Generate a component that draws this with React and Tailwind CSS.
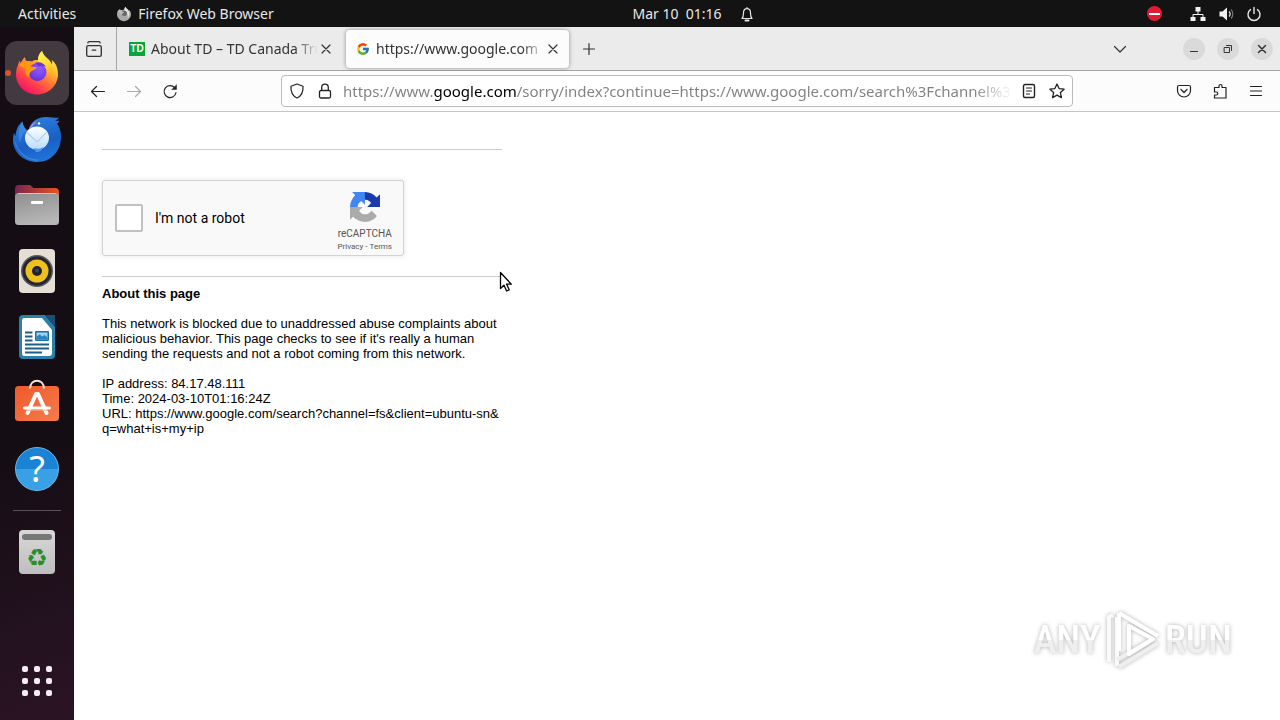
import { useState } from "react";
import { FcGoogle } from "react-icons/fc";

const FirefoxLogo = ({ className }) => (
  <svg viewBox="0 0 48 48" className={className} aria-hidden="true">
    <defs>
      <linearGradient id="ffBody" x1="0.85" y1="0.1" x2="0.25" y2="0.95">
        <stop offset="0" stopColor="#fff44f" />
        <stop offset="0.3" stopColor="#ffb52e" />
        <stop offset="0.55" stopColor="#ff7139" />
        <stop offset="0.8" stopColor="#ff3750" />
        <stop offset="1" stopColor="#f5156c" />
      </linearGradient>
      <linearGradient id="ffFlame" x1="0.3" y1="0" x2="0.7" y2="1">
        <stop offset="0" stopColor="#fff44f" />
        <stop offset="0.5" stopColor="#ffd83a" />
        <stop offset="1" stopColor="#ff980e" stopOpacity="0" />
      </linearGradient>
      <radialGradient id="ffGlobe" cx="0.6" cy="0.3" r="0.8">
        <stop offset="0" stopColor="#9059ff" />
        <stop offset="0.6" stopColor="#7542e5" />
        <stop offset="1" stopColor="#592acb" />
      </radialGradient>
    </defs>
    <path
      fill="url(#ffBody)"
      d="M29 2c1 4 4 6 7 9 1.500 1.500 2.500 3 3 4.500.3-1.500.2-3-.3-4.500C43 14 45 19.500 45 25c0 11.600-9.400 20.500-21 20.500S3 36.600 3 25c0-3.500.8-6.500 2-9 .2-1.500.8-3 2-4.200.1 1 .3 1.700.7 2.200C8.800 12 9.800 10 12 8c0 1.500.5 3 1.500 4 2-.3 4 0 5.500.6C21 10.500 24 11 25 11c0-4 1.500-7 4-9z"
    />
    <path fill="url(#ffFlame)" d="M29 2c1 4 4 6 7 9 5 6 5 15 2 21-3-8-7-14-13-19-.5-4 1-8.500 4-11z" />
    <circle cx="24.500" cy="23" r="9" fill="url(#ffGlobe)" />
    <path fill="#6b33d6" d="M22 14c4-2 9 0 11 4-3-1.500-5-1.500-7-.5z" />
    <path
      fill="#ff980e"
      d="M6 16c4-4 9-4.500 13-3.400-2 1.200-2.800 2.600-3 3.900 2 1.500 4.700 1.500 7.700 1.500 0 2-3.200 3.200-5.200 4.200-1.800 1-2.500 2.800-2 5.800-3-1-5-4-4-8z"
    />
  </svg>
);

const ThunderbirdLogo = () => (
  <svg viewBox="0 0 48 48" className="size-12" aria-hidden="true">
    <defs>
      <linearGradient id="tbBody" x1="0.3" y1="0" x2="0.6" y2="1">
        <stop offset="0" stopColor="#2f7fdc" />
        <stop offset="0.6" stopColor="#1a5fc4" />
        <stop offset="1" stopColor="#1f76dc" />
      </linearGradient>
      <linearGradient id="tbMail" x1="0" y1="0" x2="0" y2="1">
        <stop offset="0" stopColor="#ffffff" />
        <stop offset="1" stopColor="#b9dbfa" />
      </linearGradient>
    </defs>
    <path
      fill="url(#tbBody)"
      d="M16 14C18 6 25 2 33 2c6 0 9 1 13 .8-1 1.600-2.500 2.200-4 2.700 2 .5 3.500.5 4.500.3-.6 1.700-1.600 2.200-2.600 2.500C46.500 12 48 16.500 48 22c0 14-10 25-23.500 25C10 47 0 37 0 25c0-3 .3-5 1-7 .5 1 .8 2 1.500 3C3 15 5 10 9.500 6.500 10 10 11 12 14 15z"
    />
    <path fill="#4a93e6" d="M9.500 6.500C5.500 12 4.500 20 7 28c1-6 3-10 6.500-12-2.500-3-3.500-6-4-9.500z" opacity="0.6" />
    <path fill="#b58ae6" d="M16 14c1.500-4 5-7 8-7.500-3 2.500-4 4.500-6.500 7z" />
    <ellipse cx="24" cy="23" rx="12" ry="11.500" fill="url(#tbMail)" />
    <path d="M14 17.500l9 8.500q1 1 2 0l8.500-8.500" fill="none" stroke="#b4d0ee" strokeWidth="1.200" />
    <path fill="#4f97ea" d="M21 33c4 1 7 1 9-1-1 4-3 5-7 5z" />
    <circle cx="26" cy="8.500" r="1.200" fill="#fff" />
    <path d="M2 27c3 11 12 18 23 18" fill="none" stroke="#50a0f5" strokeWidth="1.500" opacity="0.4" />
  </svg>
);

const FilesIcon = () => (
  <svg viewBox="0 0 48 48" className="size-12" aria-hidden="true">
    <defs>
      <linearGradient id="fTab" x1="0" x2="1">
        <stop offset="0" stopColor="#7a2450" />
        <stop offset="1" stopColor="#e9541f" />
      </linearGradient>
      <linearGradient id="fBody" x1="0" y1="0" x2="0.3" y2="1">
        <stop offset="0" stopColor="#8e8e8e" />
        <stop offset="1" stopColor="#b6b6b6" />
      </linearGradient>
    </defs>
    <path fill="url(#fTab)" d="M2 8q0-4 4-4h11l3.500 3H42q4 0 4 4v12H2z" />
    <rect x="2" y="12" width="44" height="32" rx="3.500" fill="url(#fBody)" />
    <path d="M5 12.500h38" stroke="#c9c9c9" />
    <rect x="18" y="20" width="12" height="3" rx="1" fill="#fff" />
  </svg>
);

const RhythmboxIcon = () => (
  <svg viewBox="0 0 48 48" className="size-12" aria-hidden="true">
    <rect x="6" y="2" width="36" height="44" rx="4" fill="#e4ded4" />
    <circle cx="24" cy="24" r="16" fill="#55585f" />
    <circle cx="24" cy="24" r="14.500" fill="#242631" />
    <circle cx="24" cy="24" r="11.500" fill="#f0c11c" />
    <circle cx="24" cy="24" r="5" fill="#20232d" />
    <circle cx="24" cy="23.500" r="2" fill="#3a4556" />
  </svg>
);

const WriterIcon = () => (
  <svg viewBox="0 0 48 48" className="size-12" aria-hidden="true">
    <path fill="#2a80a8" d="M10 2h22l10 12v28q0 4-4 4H10q-4 0-4-4V6q0-4 4-4z" />
    <path fill="#fff" d="M11 5h18l10 12v23q0 3-3 3H11q-2 0-2-3V8q0-3 2-3z" />
    <path fill="#174f77" d="M32 2h10v12z" />
    <path d="M12 19.500h7.500M12 23.500h7.500M12 27.500h7.500M12 31.500h24M12 35.500h24M12 39.500h17" stroke="#1b5f8a" strokeWidth="1.800" />
    <rect x="22" y="18" width="14" height="10" rx="1" fill="#1b6fa5" />
    <rect x="23.500" y="19.500" width="11" height="7" fill="#9bd3f2" />
    <path fill="#2686c2" d="M23.500 26.500v-3l3-2 3 2 2-1.500 3 2.500v2z" />
  </svg>
);

const SoftwareIcon = () => (
  <svg viewBox="0 0 48 48" className="size-12" aria-hidden="true">
    <defs>
      <linearGradient id="swBag" x1="0" y1="0" x2="1" y2="1">
        <stop offset="0" stopColor="#f0592a" />
        <stop offset="1" stopColor="#f47c4d" />
      </linearGradient>
    </defs>
    <rect x="2" y="7" width="44" height="35" rx="3.500" fill="url(#swBag)" />
    <path d="M17 9.500C17 -1 31 -1 31 9.500" fill="none" stroke="#f5ded3" strokeWidth="2" />
    <g stroke="#fff" strokeLinecap="round" fill="none">
      <path d="M23 15L14.500 34" strokeWidth="4" />
      <path d="M25 15l8.500 19" strokeWidth="4" />
      <path d="M11.500 29h25" strokeWidth="3" />
    </g>
    <path d="M13 31.200h22" stroke="#f2a78a" />
  </svg>
);

const HelpIcon = () => (
  <span className="flex size-11 items-center justify-center rounded-full border border-[#6bb8ee] bg-linear-to-b from-[#1b83d6] from-50% to-[#3aa0e6] to-50% font-['Noto_Sans',sans-serif] text-4xl leading-none text-white">
    ?
  </span>
);

const TrashIcon = () => (
  <span className="flex h-11 w-9 flex-col items-center rounded-sm bg-linear-to-b from-[#d8d8d8] to-[#bebebe] pt-1">
    <span className="h-1.5 w-[30px] rounded-sm bg-[#777]" />
    <span className="mt-1 font-['DejaVu_Sans',sans-serif] text-2xl leading-7 text-[#2a8e28]">♻</span>
  </span>
);

const AppsIcon = () => (
  <span className="grid grid-cols-3 gap-1.5">
    {[0, 1, 2, 3, 4, 5, 6, 7, 8].map((n) => (
      <span key={n} className="size-1.5 rounded-xs bg-[#f6ecf4]" />
    ))}
  </span>
);

const dockApps = [
  { name: "Firefox", icon: <FirefoxLogo className="size-12" />, active: true },
  { name: "Thunderbird", icon: <ThunderbirdLogo /> },
  { name: "Files", icon: <FilesIcon /> },
  { name: "Rhythmbox", icon: <RhythmboxIcon /> },
  { name: "LibreOffice Writer", icon: <WriterIcon /> },
  { name: "Ubuntu Software", icon: <SoftwareIcon /> },
  { name: "Help", icon: <HelpIcon /> },
];

const DockButton = ({ name, icon, active }) => (
  <button
    aria-label={name}
    className={`relative flex size-16 shrink-0 items-center justify-center rounded-xl ${active ? "bg-[#433a40]" : ""}`}
  >
    {active && <span className="absolute left-0 size-1.5 rounded-full bg-[#e2502a]" />}
    {icon}
  </button>
);

const Dock = () => (
  <nav className="flex w-[74px] shrink-0 flex-col items-center gap-0.5 bg-[linear-gradient(160deg,#150d14_60%,#2b1425)] pt-3.5 pb-[7px]">
    {dockApps.map((app) => (
      <DockButton key={app.name} {...app} />
    ))}
    <div className="my-[7px] h-px w-12 shrink-0 bg-[#5a5056]" />
    <DockButton name="Trash" icon={<TrashIcon />} />
    <div className="mt-auto">
      <DockButton name="Show Applications" icon={<AppsIcon />} />
    </div>
  </nav>
);

// 16px line icons used across the browser chrome
const Icon = ({ children, className = "size-4" }) => (
  <svg
    viewBox="0 0 16 16"
    className={`shrink-0 ${className}`}
    fill="none"
    stroke="currentColor"
    strokeWidth="1.200"
    strokeLinecap="round"
    strokeLinejoin="round"
    aria-hidden="true"
  >
    {children}
  </svg>
);

const CloseIcon = () => (
  <Icon>
    <path d="M4 4l8 8M12 4l-8 8" />
  </Icon>
);

const TopBar = () => (
  <header className="grid h-[27px] grid-cols-[1fr_auto_1fr] items-center bg-[#131313] text-sm text-[#e8e8e8]">
    <div className="flex items-center pl-[18px]">
      <button>Activities</button>
      <button className="ml-10 flex items-center gap-1.5">
        <svg viewBox="0 0 48 48" className="size-4" aria-hidden="true">
          <path
            fill="#a9a9a9"
            d="M29 2c1 4 4 6 7 9 1.500 1.500 2.500 3 3 4.500.3-1.500.2-3-.3-4.500C43 14 45 19.500 45 25c0 11.600-9.400 20.500-21 20.500S3 36.600 3 25c0-3.500.8-6.500 2-9 .2-1.500.8-3 2-4.200C8.800 12 9.800 10 12 8c0 1.500.5 3 1.500 4 2-.3 4 0 5.500.6C21 10.500 24 11 25 11c0-4 1.500-7 4-9z"
          />
          <path fill="#e2e2e2" d="M29 2c1 4 4 6 7 9 6 7 5 18-1 25 2-10-3-18-10-23 0-5 1-8 4-11z" />
          <circle cx="25" cy="22" r="8" fill="#666" />
          <path fill="#bbb" d="M6 16c4-4 9-4.500 13-3.400-2 1.200-2.800 2.600-3 3.900 2 1.500 5 1.500 8 1.500 0 3-6 4-8 10z" />
        </svg>
        Firefox Web Browser
      </button>
    </div>
    <button className="flex items-center gap-[17px] pl-[107px]">
      <span className="whitespace-pre">Mar 10  01:16</span>
      <Icon>
        <path d="M8 1.500v1M3 12.500c1.500-1.500 1.500-3 1.500-5.500 0-2.600 1.300-4.300 3.500-4.300s3.500 1.700 3.500 4.300c0 2.500 0 4 1.500 5.500z" />
        <path d="M6.500 14.500h3" strokeWidth="2" />
      </Icon>
    </button>
    <div className="flex items-center justify-end pr-[18px]">
      <span className="mr-7 flex size-[15px] items-center justify-center rounded-full bg-[#e01b34]">
        <span className="h-0.5 w-[11px] bg-white" />
      </span>
      <button aria-label="System menu" className="flex items-center gap-3">
        <svg viewBox="0 0 16 16" className="size-4" aria-hidden="true">
          <path fill="#f2f2f2" d="M5.500 1h5v4.500h-5zM.5 11h5v4h-5zM10.500 11h5v4h-5z" />
          <path d="M8 5v3.500M3 11V8.500h10V11" stroke="#f2f2f2" fill="none" />
        </svg>
        <svg viewBox="0 0 16 16" className="size-4" fill="none" aria-hidden="true">
          <path fill="#f2f2f2" d="M1.500 5.500h3L9 1.500v13L4.500 10.500h-3z" />
          <path d="M11 5.500c1.400 1.500 1.400 3.500 0 5" stroke="#ddd" strokeWidth="1.300" />
          <path d="M13 3.500c2.400 2.500 2.400 6.500 0 9" stroke="#777" strokeWidth="1.200" />
        </svg>
        <Icon>
          <path d="M8 1.500v6M4.500 3.600a6 6 0 1 0 7 0" strokeWidth="1.400" />
        </Icon>
      </button>
    </div>
  </header>
);

const Tab = ({ favicon, title, active }) => (
  <div
    className={`flex items-center ${
      active ? "ml-1 h-[38px] w-[223px] rounded-sm bg-[#fcfcfc] pr-2 pl-2.5 shadow-[0_0_4px_rgba(0,0,0,0.4)]" : "h-full w-[225px] pr-2 pl-3"
    }`}
  >
    <button className="flex min-w-0 flex-1 items-center gap-1.5 text-left">
      {favicon}
      <span className="flex-1 overflow-hidden whitespace-nowrap mask-r-from-86% mask-r-to-100%">{title}</span>
    </button>
    <button aria-label="Close tab">
      <CloseIcon />
    </button>
  </div>
);

const WindowButton = ({ label, children }) => (
  <button aria-label={label} className="flex size-[22px] items-center justify-center rounded-full bg-[#dadada]">
    {children}
  </button>
);

const TabStrip = () => (
  <div className="flex h-11 items-center border-b border-[#a5a5a5] bg-[#ebebeb] text-sm text-[#333]">
    <button aria-label="Firefox View" className="flex h-full w-[43px] items-center justify-center border-r border-[#a5a5a5] pr-0.5">
      <Icon className="size-[18px]">
        <rect x="1.500" y="5" width="13" height="9.500" rx="1.500" />
        <path d="M2.500 2.500q.2-1 1.200-1h8.600q1 0 1.200 1M6.500 9h3" />
      </Icon>
    </button>
    <Tab
      title="About TD – TD Canada Trust"
      favicon={
        <span className="flex h-3.5 w-4 shrink-0 items-center justify-center bg-[#08a63a] font-['Liberation_Sans',sans-serif] text-[10px] leading-none font-bold text-white">
          TD
        </span>
      }
    />
    <Tab active title="https://www.google.com" favicon={<FcGoogle className="size-3.5 shrink-0" />} />
    <button aria-label="New tab" className="ml-0.5 flex h-9 w-9 items-center justify-center">
      <Icon>
        <path d="M8 2.500v11M2.500 8h11" />
      </Icon>
    </button>
    <button aria-label="List all tabs" className="mr-[55px] ml-auto">
      <Icon>
        <path d="M2.500 5.500L8 11l5.500-5.500" />
      </Icon>
    </button>
    <div className="flex gap-3 pr-[7px]">
      <WindowButton label="Minimize">
        <Icon>
          <path d="M4.500 10.500h7" />
        </Icon>
      </WindowButton>
      <WindowButton label="Restore">
        <Icon>
          <path d="M4.500 6.500h5v5h-5zM6.500 4.500h5v5" strokeWidth="1" />
        </Icon>
      </WindowButton>
      <WindowButton label="Close">
        <Icon>
          <path d="M4.500 4.500l7 7M11.500 4.500l-7 7" strokeWidth="1.500" />
        </Icon>
      </WindowButton>
    </div>
  </div>
);

const ToolButton = ({ label, children, className = "" }) => (
  <button aria-label={label} className={`flex size-9 shrink-0 items-center justify-center ${className}`}>
    <Icon>{children}</Icon>
  </button>
);

const Toolbar = () => {
  const [url, setUrl] = useState(
    "https://www.google.com/sorry/index?continue=https://www.google.com/search%3Fchannel%3Dfs"
  );

  return (
    <div className="grid h-[41px] grid-cols-[207fr_792fr_207fr] items-center border-b border-[#c4c4c4] bg-[#fcfcfc] text-[#222]">
      <div className="flex pl-1.5">
        <ToolButton label="Back">
          <path d="M14.500 8.500h-13M6.500 3.500l-5 5 5 5" />
        </ToolButton>
        <ToolButton label="Forward" className="text-[#aaa]">
          <path d="M1.500 8.500h13M9.500 3.500l5 5-5 5" />
        </ToolButton>
        <ToolButton label="Reload">
          <path d="M14 9.500A6 6 0 1 1 12.600 4.600" />
          <path d="M14.500 2v4.500H10z" fill="currentColor" strokeWidth="0.500" />
        </ToolButton>
      </div>
      <div className="flex h-8 items-center rounded-sm border border-[#bbb] bg-white px-[7px]">
        <button aria-label="Tracking protection">
          <Icon>
            <path d="M8 1L14 3.300C14.400 9 12.500 13 8 15 3.500 13 1.600 9 2 3.300z" />
          </Icon>
        </button>
        <button aria-label="Site information" className="ml-3">
          <Icon>
            <rect x="2.500" y="7.500" width="11" height="7.500" rx="1.500" strokeWidth="1.300" />
            <path d="M4.700 7V4.500a3.300 3.300 0 0 1 6.600 0V7" strokeWidth="1.300" />
          </Icon>
        </button>
        <input
          aria-label="Address"
          value={url}
          onChange={(e) => setUrl(e.target.value)}
          className="ml-2.5 min-w-0 flex-1 bg-[linear-gradient(90deg,#808080_0_91px,#000_91px_174px,#808080_174px_calc(100%-40px),transparent)] bg-clip-text text-[15px] text-transparent outline-none"
        />
        <button aria-label="Reader view" className="ml-2">
          <Icon>
            <rect x="2.500" y="1.500" width="11" height="13" rx="1.500" strokeWidth="1.400" />
            <path d="M5.500 5h5M5.500 8h5M5.500 11h3" />
          </Icon>
        </button>
        <button aria-label="Bookmark this page" className="ml-3">
          <Icon>
            <path d="M8 1l2.100 4.600 5 .6-3.700 3.400 1 5L8 12.100l-4.400 2.500 1-5L.9 6.200l5-.6z" strokeWidth="1.300" />
          </Icon>
        </button>
      </div>
      <div className="flex justify-end pr-1.5">
        <ToolButton label="Save to Pocket">
          <path d="M3 2.500h10q1.500 0 1.500 1.500v3.500a6.500 6.500 0 0 1-13 0V4q0-1.500 1.500-1.500z" />
          <path d="M5 6.500l3 3 3-3" />
        </ToolButton>
        <ToolButton label="Extensions">
          <path d="M2.500 7V4.500H7V3a1.500 1.500 0 0 1 3 0v1.500h4v10.500H2.500v-3H4.300a1.500 1.500 0 0 0 0-3H2.500z" />
        </ToolButton>
        <ToolButton label="Open application menu">
          <path d="M2.500 3.500h11M2.500 8h11M2.500 12.500h11" />
        </ToolButton>
      </div>
    </div>
  );
};

const Recaptcha = () => (
  <div className="flex h-[76px] w-[302px] justify-between rounded-[3px] border border-[#d3d3d3] bg-[#f9f9f9] font-[Roboto,sans-serif] shadow-[0_0_4px_1px_rgba(0,0,0,0.08)]">
    <label className="flex items-center gap-3 pl-3 text-sm text-black">
      <input type="checkbox" className="size-7 appearance-none rounded-xs border-2 border-[#c1c1c1] bg-white" />
      I'm not a robot
    </label>
    <div className="flex flex-col items-center pt-[11px] pr-[11px] text-[#555]">
      <svg viewBox="0 0 64 64" className="size-[30px]" aria-hidden="true">
        <path
          fill="#1c3aa9"
          d="M64 31.955l-.033-1.370V4.687l-7.160 7.160C50.948 4.674 42.033.093 32.050.093c-10.400 0-19.622 4.960-25.458 12.640l11.736 11.860a15.550 15.550 0 0 1 4.754-5.334c2.050-1.600 4.952-2.906 8.968-2.906.485 0 .860.057 1.135.163 4.976.393 9.288 3.140 11.828 7.124l-8.307 8.307L64 31.953"
        />
        <path
          fill="#4285f4"
          d="M31.862.094l-1.370.033H4.594l7.160 7.160C4.580 13.147 0 22.060 0 32.046c0 10.400 4.960 19.622 12.640 25.458L24.500 45.768a15.550 15.550 0 0 1-5.334-4.754c-1.600-2.050-2.906-4.952-2.906-8.968 0-.485.057-.860.163-1.135.393-4.976 3.140-9.288 7.124-11.828l8.307 8.307L31.860.095"
        />
        <path
          fill="#ababab"
          d="M.001 32.045l.033 1.370v25.898l7.160-7.160c5.860 7.173 14.774 11.754 24.760 11.754 10.400 0 19.622-4.960 25.458-12.640l-11.736-11.860a15.550 15.550 0 0 1-4.754 5.334c-2.050 1.600-4.952 2.906-8.968 2.906-.485 0-.860-.057-1.135-.163-4.976-.393-9.288-3.140-11.828-7.124l8.307-8.307c-10.522.040-22.400.066-27.295-.005"
        />
      </svg>
      <span className="mt-1.5 text-[10px] leading-3">reCAPTCHA</span>
      <span className="mt-0.5 flex gap-0.5 text-[8px] leading-[10px]">
        <a href="#privacy">Privacy</a>
        <span>-</span>
        <a href="#terms">Terms</a>
      </span>
    </div>
  </div>
);

const BlockedPage = () => (
  <main className="w-[428px] pt-[37px] pl-7 font-['Liberation_Sans',Arial,sans-serif] text-[13px] leading-[15px] text-black">
    <hr className="border-[#ccc]" />
    <div className="mt-[30px] mb-5">
      <Recaptcha />
    </div>
    <hr className="mb-[9px] border-[#ccc]" />
    <h1 className="font-bold">About this page</h1>
    <p className="mt-[15px]">
      This network is blocked due to unaddressed abuse complaints about malicious behavior. This page checks to see if
      it's really a human sending the requests and not a robot coming from this network.
    </p>
    <p className="mt-[15px]">
      IP address: 84.17.48.111
      <br />
      Time: 2024-03-10T01:16:24Z
      <br />
      URL: https://www.google.com/search?channel=fs&amp;client=ubuntu-sn&amp;
      <br />
      q=what+is+my+ip
    </p>
  </main>
);

const Watermark = () => (
  <div className="absolute right-12 bottom-12 flex items-center gap-1 font-['Liberation_Sans_Narrow','Roboto_Condensed',Roboto,sans-serif] text-[39px] leading-none font-medium drop-shadow-[0_0_2px_rgba(0,0,0,0.3)]">
    <span className="bg-linear-to-b from-white from-50% to-[#efefef] to-50% bg-clip-text text-transparent">ANY</span>
    <svg viewBox="0 0 56 64" className="h-16 w-14" fill="none" strokeWidth="4" strokeLinejoin="round" aria-hidden="true">
      <path d="M4 54V9l4-2M12 58V9" stroke="#fafafa" />
      <path d="M14 59l39-24M12 52l34-20" stroke="#efefef" />
      <path d="M14 5v38M14 5l39 23M24 18v28l24-15z" stroke="#fff" />
    </svg>
    <span className="bg-linear-to-b from-white from-50% to-[#efefef] to-50% bg-clip-text text-transparent">RUN</span>
  </div>
);

const Pointer = () => (
  <svg viewBox="0 0 14 22" className="absolute top-[271px] left-[499px] h-[22px] w-3.5" aria-hidden="true">
    <path
      d="M1.500 1.500v16l3.500-3.300 2.600 5.800 2.600-1.200-2.600-5.600h4.700z"
      fill="#fff"
      stroke="#000"
      strokeWidth="1.300"
      strokeLinejoin="round"
    />
  </svg>
);

export default function App() {
  return (
    <div className="relative flex min-h-screen flex-col bg-white font-['Noto_Sans','Open_Sans',sans-serif]">
      <TopBar />
      <div className="flex flex-1">
        <Dock />
        <div className="flex min-w-0 flex-1 flex-col">
          <TabStrip />
          <Toolbar />
          <BlockedPage />
        </div>
      </div>
      <Watermark />
      <Pointer />
    </div>
  );
}
